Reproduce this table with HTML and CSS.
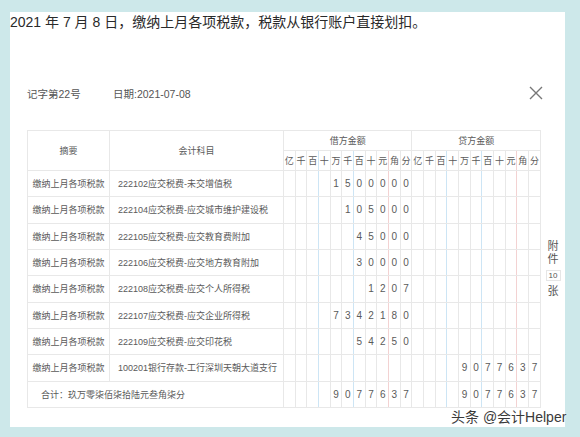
FILE: index.html
```html
<!DOCTYPE html>
<html lang="zh">
<head>
<meta charset="utf-8">
<title>记账凭证</title>
<link rel="stylesheet" href="styles.css">
</head>
<body>
<div class="panel">
  <p class="intro">2021 年 7 月 8 日，缴纳上月各项税款，税款从银行账户直接划扣。</p>
  <div class="voucher">
    <div class="meta">
      <span class="meta-no">记字第22号</span>
      <span class="meta-date">日期:2021-07-08</span>
      <svg class="close" viewBox="0 0 14 14" width="14" height="14"><path d="M1 1L13 13M13 1L1 13" stroke="#777" stroke-width="1.4" fill="none"/></svg>
    </div>
    <div class="body">
      <table class="grid">
        <colgroup>
          <col class="c-summary"><col class="c-account">
          <col><col><col><col><col><col><col><col><col><col><col>
          <col><col><col><col><col><col><col><col><col><col><col>
        </colgroup>
        <thead>
          <tr class="head1">
            <th rowspan="2">摘要</th>
            <th rowspan="2">会计科目</th>
            <th colspan="11">借方金额</th>
            <th colspan="11">贷方金额</th>
          </tr>
          <tr class="head2">
            <th>亿</th><th>千</th><th>百</th><th>十</th><th>万</th><th>千</th><th>百</th><th>十</th><th>元</th><th>角</th><th>分</th>
            <th>亿</th><th>千</th><th>百</th><th>十</th><th>万</th><th>千</th><th>百</th><th>十</th><th>元</th><th>角</th><th>分</th>
          </tr>
        </thead>
        <tbody>
          <tr class="row">
            <td class="summary">缴纳上月各项税款</td><td class="account">222102应交税费-未交增值税</td>
            <td></td><td></td><td></td><td></td><td>1</td><td>5</td><td>0</td><td>0</td><td>0</td><td>0</td><td>0</td>
            <td></td><td></td><td></td><td></td><td></td><td></td><td></td><td></td><td></td><td></td><td></td>
          </tr>
          <tr class="row">
            <td class="summary">缴纳上月各项税款</td><td class="account">222104应交税费-应交城市维护建设税</td>
            <td></td><td></td><td></td><td></td><td></td><td>1</td><td>0</td><td>5</td><td>0</td><td>0</td><td>0</td>
            <td></td><td></td><td></td><td></td><td></td><td></td><td></td><td></td><td></td><td></td><td></td>
          </tr>
          <tr class="row">
            <td class="summary">缴纳上月各项税款</td><td class="account">222105应交税费-应交教育费附加</td>
            <td></td><td></td><td></td><td></td><td></td><td></td><td>4</td><td>5</td><td>0</td><td>0</td><td>0</td>
            <td></td><td></td><td></td><td></td><td></td><td></td><td></td><td></td><td></td><td></td><td></td>
          </tr>
          <tr class="row">
            <td class="summary">缴纳上月各项税款</td><td class="account">222106应交税费-应交地方教育附加</td>
            <td></td><td></td><td></td><td></td><td></td><td></td><td>3</td><td>0</td><td>0</td><td>0</td><td>0</td>
            <td></td><td></td><td></td><td></td><td></td><td></td><td></td><td></td><td></td><td></td><td></td>
          </tr>
          <tr class="row">
            <td class="summary">缴纳上月各项税款</td><td class="account">222108应交税费-应交个人所得税</td>
            <td></td><td></td><td></td><td></td><td></td><td></td><td></td><td>1</td><td>2</td><td>0</td><td>7</td>
            <td></td><td></td><td></td><td></td><td></td><td></td><td></td><td></td><td></td><td></td><td></td>
          </tr>
          <tr class="row">
            <td class="summary">缴纳上月各项税款</td><td class="account">222107应交税费-应交企业所得税</td>
            <td></td><td></td><td></td><td></td><td>7</td><td>3</td><td>4</td><td>2</td><td>1</td><td>8</td><td>0</td>
            <td></td><td></td><td></td><td></td><td></td><td></td><td></td><td></td><td></td><td></td><td></td>
          </tr>
          <tr class="row">
            <td class="summary">缴纳上月各项税款</td><td class="account">222109应交税费-应交印花税</td>
            <td></td><td></td><td></td><td></td><td></td><td></td><td>5</td><td>4</td><td>2</td><td>5</td><td>0</td>
            <td></td><td></td><td></td><td></td><td></td><td></td><td></td><td></td><td></td><td></td><td></td>
          </tr>
          <tr class="row">
            <td class="summary">缴纳上月各项税款</td><td class="account">100201银行存款-工行深圳天朝大道支行</td>
            <td></td><td></td><td></td><td></td><td></td><td></td><td></td><td></td><td></td><td></td><td></td>
            <td></td><td></td><td></td><td></td><td>9</td><td>0</td><td>7</td><td>7</td><td>6</td><td>3</td><td>7</td>
          </tr>
          <tr class="total">
            <td class="total-label" colspan="2">合计：玖万零柒佰柒拾陆元叁角柒分</td>
            <td></td><td></td><td></td><td></td><td>9</td><td>0</td><td>7</td><td>7</td><td>6</td><td>3</td><td>7</td>
            <td></td><td></td><td></td><td></td><td>9</td><td>0</td><td>7</td><td>7</td><td>6</td><td>3</td><td>7</td>
          </tr>
        </tbody>
      </table>
      <div class="attach">
        <span class="att-ch">附</span>
        <span class="att-ch">件</span>
        <span class="att-num">10</span>
        <span class="att-ch">张</span>
      </div>
    </div>
  </div>
  <div class="watermark">头条 @会计Helper</div>
</div>
</body>
</html>
```

FILE: styles.css
```css
* { box-sizing: border-box; }

body {
  margin: 0;
  background: #cde8ea;
  font-family: "Liberation Sans", "Noto Sans CJK SC", sans-serif;
}

.panel {
  position: relative;
  margin: 12px 0 0 10px;
  width: 555px;
  height: 415px;
  background: #fff;
}

.intro {
  margin: 0;
  font-size: 14px;
  line-height: 20px;
  color: #2a2a2a;
}

.voucher {
  padding: 51px 0 0 17px;
}

.meta {
  display: flex;
  align-items: center;
  height: 20px;
  padding-right: 22px;
  font-size: 10.5px;
  color: #555;
}

.meta-no { width: 86px; }
.meta-date { flex: 1; }

.close {
  width: 14px;
  height: 14px;
}

.body {
  display: flex;
  align-items: center;
  margin-top: 27px;
}

.grid {
  border-collapse: collapse;
  table-layout: fixed;
  width: 514px;
  color: #5a5a5a;
}

.c-summary { width: 82px; }
.c-account { width: 174px; }

.grid th,
.grid td {
  border: 1px solid #e8e8e8;
  padding: 0;
  font-weight: normal;
  text-align: center;
  white-space: nowrap;
  overflow: hidden;
}

.grid th {
  font-size: 9px;
  height: 20px;
}

.grid td {
  height: 26.33px;
  font-size: 10px;
}

.grid td.summary { font-size: 9px; }

.grid td.account {
  font-size: 9px;
  text-align: left;
  padding-left: 8px;
}

.grid td.total-label {
  font-size: 9px;
  text-align: left;
  padding-left: 13px;
}

.head2 th:nth-child(3),
.head2 th:nth-child(6),
.head2 th:nth-child(14),
.head2 th:nth-child(17),
.row td:nth-child(5),
.row td:nth-child(8),
.row td:nth-child(16),
.row td:nth-child(19),
.total td:nth-child(4),
.total td:nth-child(7),
.total td:nth-child(15),
.total td:nth-child(18) {
  border-right-color: #cde5f5;
}

.head2 th:nth-child(9),
.head2 th:nth-child(20),
.row td:nth-child(11),
.row td:nth-child(22),
.total td:nth-child(10),
.total td:nth-child(21) {
  border-right-color: #f3d2d2;
}

.attach {
  width: 24px;
  display: flex;
  flex-direction: column;
  align-items: center;
  font-size: 11px;
  line-height: 13px;
  color: #555;
}

.att-num {
  margin: 4px 0;
  width: 15px;
  height: 11px;
  border: 1px solid #e6e6e6;
  font-size: 8px;
  line-height: 9px;
  text-align: center;
}

.watermark {
  position: absolute;
  left: 441px;
  top: 396px;
  font-size: 14px;
  line-height: 18px;
  color: #3a3a3a;
  white-space: nowrap;
  text-shadow: 0 0 2px #fff, 0 0 2px #fff;
}
```
